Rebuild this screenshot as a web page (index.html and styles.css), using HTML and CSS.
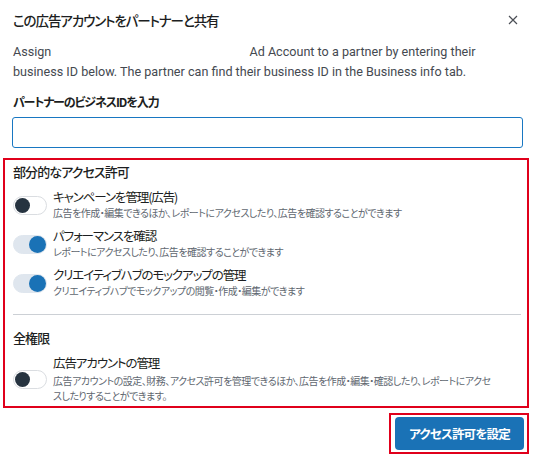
FILE: index.html
```html
<!DOCTYPE html>
<html lang="ja">
<head>
<meta charset="utf-8">
<link rel="stylesheet" href="styles.css">
</head>
<body>
<div class="dialog">
  <div class="header">
    <div class="title">この広告アカウントをパートナーと共有</div>
    <svg class="close" width="10" height="10" viewBox="0 0 10 10"><path d="M1 1 L9 9 M9 1 L1 9" stroke="#4b4f56" stroke-width="1.2" fill="none"/></svg>
  </div>
  <p class="desc"><span class="assign">Assign</span> Ad Account to a partner by entering their business ID below. The partner can find their business ID in the Business info tab.</p>
  <div class="label">パートナーのビジネスIDを入力</div>
  <input class="field" type="text">
  <div class="perms">
    <div class="sec-title">部分的なアクセス許可</div>
    <div class="items">
      <div class="item">
        <span class="toggle off"><span class="knob"></span></span>
        <div class="txt">
          <div class="it-title">キャンペーンを管理(広告)</div>
          <div class="it-desc">広告を作成・編集できるほか、レポートにアクセスしたり、広告を確認することができます</div>
        </div>
      </div>
      <div class="item">
        <span class="toggle on"><span class="knob"></span></span>
        <div class="txt">
          <div class="it-title">パフォーマンスを確認</div>
          <div class="it-desc">レポートにアクセスしたり、広告を確認することができます</div>
        </div>
      </div>
      <div class="item">
        <span class="toggle on"><span class="knob"></span></span>
        <div class="txt">
          <div class="it-title">クリエイティブハブのモックアップの管理</div>
          <div class="it-desc">クリエイティブハブでモックアップの閲覧・作成・編集ができます</div>
        </div>
      </div>
    </div>
    <div class="divider"></div>
    <div class="sec-title full">全権限</div>
    <div class="item last">
      <span class="toggle off"><span class="knob"></span></span>
      <div class="txt">
        <div class="it-title">広告アカウントの管理</div>
        <div class="it-desc">広告アカウントの設定、財務、アクセス許可を管理できるほか、広告を作成・編集・確認したり、レポートにアクセスしたりすることができます。</div>
      </div>
    </div>
  </div>
  <div class="footer">
    <div class="btn-wrap"><button class="btn">アクセス許可を設定</button></div>
  </div>
</div>
</body>
</html>
```

FILE: styles.css
```css
* { box-sizing: border-box; }
html, body { margin: 0; padding: 0; background: #fff; }
body {
  font-family: Roboto, "Noto Sans CJK JP", sans-serif;
  color: #1c1e21;
  width: 535px;
}
.title, .label, .sec-title, .txt, .btn {
  font-family: "Noto Sans CJK JP", sans-serif;
  font-feature-settings: "palt" 1;
}
.dialog { padding: 0 6px 0 3px; }
.header {
  display: flex;
  align-items: center;
  justify-content: space-between;
  height: 40px;
  padding: 0 11px 0 10px;
}
.title {
  font-size: 13.5px;
  font-weight: 500;
  color: #1c1e21;
  letter-spacing: -1.1px;
}
.close { display: block; }
.desc {
  margin: 2px 0 0;
  padding: 0 10px;
  font-size: 12.6px;
  line-height: 20px;
  color: #444950;
}
.assign { margin-right: 195px; }
.label {
  margin-top: 10px;
  padding: 0 10px;
  font-size: 12px;
  font-weight: 700;
  line-height: 20px;
  color: #1c1e21;
  letter-spacing: -1.1px;
}
.field {
  display: block;
  margin: 5px 0 0 9px;
  width: 511px;
  height: 31px;
  border: 1.5px solid #1877c2;
  border-radius: 3px;
  outline: none;
}
.perms {
  margin-top: 10px;
  border: 2px solid #e0001b;
  padding: 2px 6px 3px 8px;
}
.sec-title {
  font-size: 13px;
  font-weight: 500;
  line-height: 20px;
  color: #1c1e21;
  letter-spacing: -0.9px;
}
.items {
  margin-top: 7px;
  display: flex;
  flex-direction: column;
  gap: 7px;
}
.item {
  display: flex;
  align-items: center;
  gap: 6px;
}
.txt { flex: 1; padding-right: 8px; }
.it-title {
  font-size: 12.5px;
  line-height: 16px;
  color: #1c1e21;
  letter-spacing: -1.1px;
}
.it-desc {
  font-size: 10px;
  line-height: 16px;
  color: #606770;
  letter-spacing: -0.5px;
}
.toggle {
  flex: none;
  position: relative;
  width: 34px;
  height: 19px;
  border-radius: 10px;
  border: 1px solid #dadde1;
  background: #fff;
}
.toggle .knob {
  position: absolute;
  top: 1px;
  left: 1px;
  width: 15px;
  height: 15px;
  border-radius: 50%;
  background: #263340;
}
.toggle.on {
  background: #dfe6ee;
  border-color: #dfe6ee;
}
.toggle.on .knob {
  left: auto;
  right: 0;
  width: 17px;
  height: 17px;
  top: 0;
  background: #1a72b6;
}
.divider {
  margin: 15px 0 13px;
  height: 1px;
  background: #ccd0d5;
}
.item.last { margin-top: 7px; }
.item.last .txt { padding-right: 28px; }
.item.last .it-title { margin-bottom: 2px; }
.item.last .it-desc { line-height: 15px; }
.footer {
  display: flex;
  justify-content: flex-end;
  margin-top: 5px;
}
.btn-wrap {
  border: 2px solid #e0001b;
  padding: 2px 3px 2px 4px;
}
.btn {
  display: block;
  width: 129px;
  height: 33px;
  border: none;
  border-radius: 4px;
  background: #1a72b6;
  color: #fff;
  font-size: 12.5px;
  font-weight: 700;
  letter-spacing: -0.8px;
}
```
